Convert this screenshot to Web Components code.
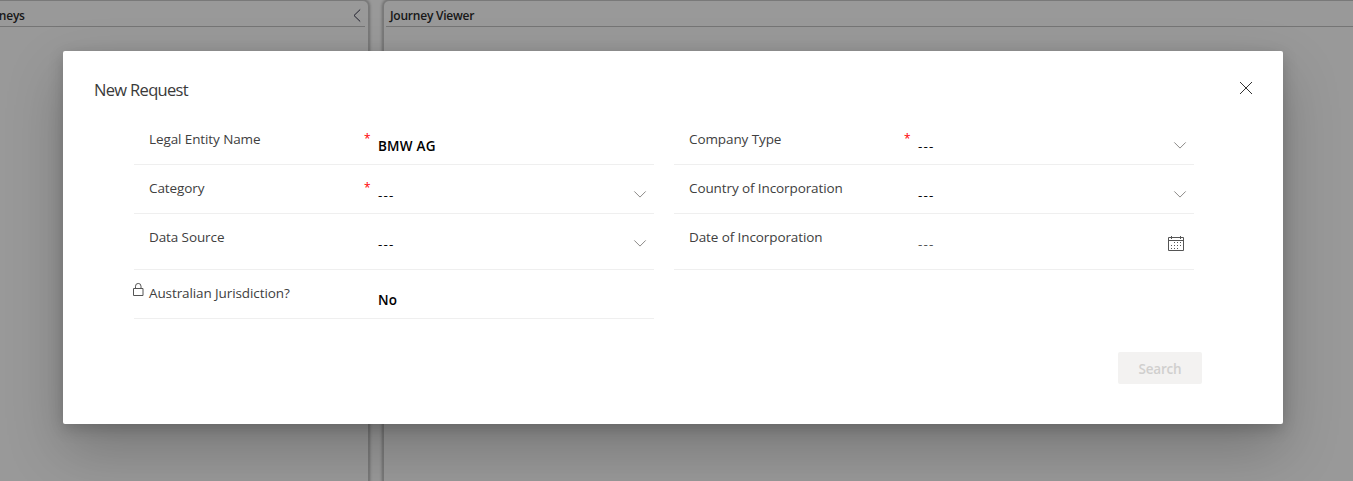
<!DOCTYPE html>
<html lang="en">
<head>
<meta charset="utf-8">
<title>New Request</title>
<style>
html,body{margin:0;height:100%;overflow:hidden;font-family:"Open Sans","Noto Sans",sans-serif}
</style>
</head>
<body>
<request-app></request-app>
<script>
const define=(name,html,setup)=>customElements.define(name,class extends HTMLElement{
  connectedCallback(){
    if(this.shadowRoot)return;
    const root=this.attachShadow({mode:'open'});
    const t=document.createElement('template');
    t.innerHTML=html;
    root.append(t.content.cloneNode(true));
    if(setup)setup(this,root);
  }
});

define('ui-icon',`<style>:host{display:block;line-height:0}svg{display:block;overflow:visible;fill:none}</style>`,(el,root)=>{
  const icons={
    left:'<svg width="8" height="13" stroke="#33334a" stroke-width="1"><path d="M7.2.5 1 6.5l6.2 6"/></svg>',
    close:'<svg width="14" height="14" stroke="#333" stroke-width="1"><path d="M1 1l12 12M13 1L1 13"/></svg>',
    down:'<svg width="12" height="7" stroke="#8c8a88" stroke-width="1"><path d="M.3.4 6 6.1 11.7.4"/></svg>',
    lock:'<svg width="11" height="14" stroke="#555" stroke-width="1"><path d="M.5 5.500h9.500v7h-9.500zM2.500 5.500V3.200a2.700 2.700 0 0 1 5.500 0v2.300"/></svg>',
    calendar:'<svg width="16" height="15" stroke="#555" stroke-width="1"><path d="M.5 1.500h15v13H.5zM0 4.500h16M3.500 0v3M12.500 0v3"/><path d="M6 6.500h8M3 9.500h11M3 12.500h8" stroke-dasharray="1 2"/></svg>'
  };
  const h=document.createElement('template');
  h.innerHTML=icons[el.getAttribute('name')];
  root.append(h.content);
});

define('work-panel',`<style>
:host{display:block;box-sizing:border-box;background:#fff;border:1px solid #cacaca;box-shadow:0 0 3px 1px rgba(0,0,0,.3);border-radius:6px}
header{display:flex;justify-content:space-between;box-sizing:border-box;height:26px;margin:0 3px 0 2px;border-bottom:1px solid #c4c4c4;padding:6px 4px 0 4px;font-weight:600;font-size:12px;line-height:18px;color:#2b2b2b;white-space:nowrap;letter-spacing:-.23px}
</style><header><slot></slot><slot name="action"></slot></header>`);

define('form-field',`<style>
:host{display:grid;grid-template-columns:15px 214px 15px 1fr auto;box-sizing:border-box;width:520px;height:49px;border-bottom:1px solid #efefef;color:#404040;font-size:14px;line-height:20px;white-space:nowrap}
:host([tall]){height:56px}
.lock{padding-top:13px;margin-left:-1px}
.label{padding-top:13px;font-size:13.5px;letter-spacing:-.1px}
.star{color:#f00;padding:13px 0 0 1px;font-size:12px}
.value{padding-top:20px;color:#000;font-weight:600;font-size:13.5px;letter-spacing:.22px}
.value.empty{font-weight:400;letter-spacing:1.2px}
:host([muted]) .value{color:#555}
.end{padding:26px 8px 0 0}
:host([icon=calendar]) .end{padding:22px 10px 0 0}
</style><span class="lock"></span><span class="label"></span><span class="star"></span><span class="value"><slot></slot></span><span class="end"></span>`,(el,root)=>{
  const q=s=>root.querySelector(s);
  q('.label').textContent=el.getAttribute('label');
  if(el.textContent==='---')q('.value').classList.add('empty');
  if(el.hasAttribute('required'))q('.star').textContent='*';
  if(el.hasAttribute('locked'))q('.lock').innerHTML='<ui-icon name="lock"></ui-icon>';
  if(el.hasAttribute('icon'))q('.end').innerHTML='<ui-icon name="'+el.getAttribute('icon')+'"></ui-icon>';
});

define('action-button',`<style>
:host{display:grid;place-items:center;width:84px;height:32px;border-radius:2px;background:#f3f2f1;color:#d0cfce;font-size:13.5px;font-weight:600;line-height:20px;letter-spacing:-.2px;padding-top:1px;height:31px}
</style><slot></slot>`);

define('request-dialog',`<style>
:host{display:flex;flex-direction:column;box-sizing:border-box;width:1220px;height:373px;background:#fff;border-radius:2px;box-shadow:0 25.6px 57.6px rgba(0,0,0,.22),0 4.8px 14.4px rgba(0,0,0,.18)}
header{display:flex;justify-content:space-between;height:65px;padding:0 30px 0 31px;box-sizing:border-box}
h1{margin:27px 0 0;font-size:16.5px;line-height:24px;font-weight:400;color:#3a3a3a;letter-spacing:-.68px}
header ui-icon{margin-top:30px}
main{display:grid;grid-template-columns:520px 520px;column-gap:20px;padding-left:71px}
footer{display:flex;justify-content:flex-end;padding:33px 81px 0 0}
</style><header><h1><slot name="title"></slot></h1><ui-icon name="close"></ui-icon></header><main><slot></slot></main><footer><slot name="footer"></slot></footer>`);

define('request-app',`<style>
:host{display:block;position:relative;width:1353px;height:481px;overflow:hidden;background:#fff}
.page{display:grid;grid-template-columns:400px 1fr;column-gap:14px;height:500px;margin:0 -20px 0 -31px;background:#fff}
.overlay{position:absolute;inset:0;display:flex;align-items:flex-start;padding:51px 0 0 63px;background:rgba(0,0,0,.4);box-sizing:border-box}
</style>
<div class="page"><work-panel>Journeys<ui-icon slot="action" name="left" style="margin-top:2px"></ui-icon></work-panel><work-panel>Journey Viewer</work-panel></div>
<div class="overlay"><request-dialog><span slot="title">New Request</span>
<form-field label="Legal Entity Name" required>BMW AG</form-field>
<form-field label="Company Type" required icon="down">---</form-field>
<form-field label="Category" required icon="down">---</form-field>
<form-field label="Country of Incorporation" icon="down">---</form-field>
<form-field label="Data Source" tall icon="down">---</form-field>
<form-field label="Date of Incorporation" tall muted icon="calendar">---</form-field>
<form-field label="Australian Jurisdiction?" locked>No</form-field>
<action-button slot="footer">Search</action-button>
</request-dialog></div>`);
</script>
</body>
</html>
